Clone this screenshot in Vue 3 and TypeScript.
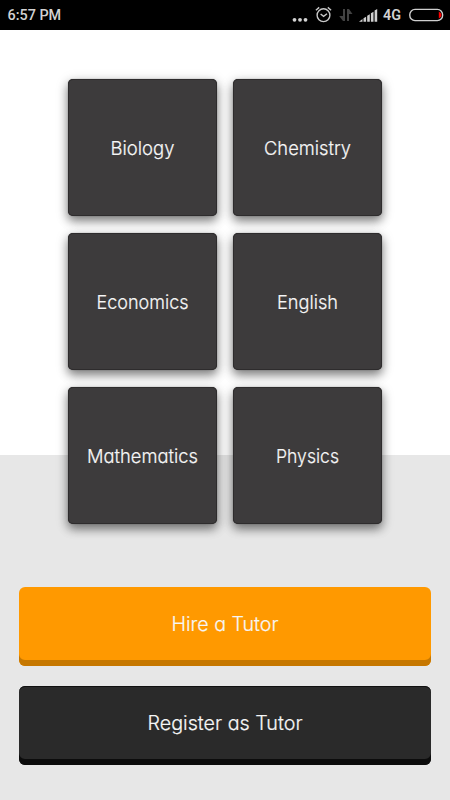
<script setup lang="ts">
interface Label {
  text: string
  width: number
}

const subjects: Label[] = [
  { text: 'Biology', width: 64 },
  { text: 'Chemistry', width: 87 },
  { text: 'Economics', width: 92 },
  { text: 'English', width: 61 },
  { text: 'Mathematics', width: 111 },
  { text: 'Physics', width: 63 },
]

const actions: (Label & { kind: string })[] = [
  { text: 'Hire a Tutor', width: 107, kind: 'hire' },
  { text: 'Register as Tutor', width: 155, kind: 'register' },
]
</script>

<template>
  <main class="screen">
    <header class="status">
      <span class="clock">6:57 PM</span>
      <svg class="dots" width="16" height="30" viewBox="0 0 16 30" fill="#d2d2d2">
        <circle cx="2.5" cy="19.8" r="1.9" />
        <circle cx="8" cy="19.8" r="1.9" />
        <circle cx="13.5" cy="19.8" r="1.9" />
      </svg>
      <svg class="alarm" width="18" height="30" viewBox="0 0 18 30" fill="none" stroke="#c8c8c8" stroke-width="1.4">
        <circle cx="8.5" cy="15.2" r="6.4" />
        <path d="M5.6 14 8.6 16.4 12 13.8M.9 10.2 4.2 7.4M16.1 10.2 12.8 7.4" />
      </svg>
      <svg class="data" width="14" height="30" viewBox="0 0 14 30" fill="#424242">
        <path d="M4 9h2v12H4L.2 16H4zM8 9h2l3.5 5H10v7H8z" />
      </svg>
      <svg class="signal" width="20" height="30" viewBox="0 0 20 30" fill="#cfcfcf">
        <path d="M0 21.7 3.5 19v2.7zM4.5 18.3 7.1 16.8v4.9H4.5zM8.2 15.8 10.8 14.3v7.4H8.2zM11.9 13.2 14.5 11.7v10H11.9zM15.6 10.4 18.2 8.9v12.8h-2.6z" />
      </svg>
      <span class="network">4G</span>
      <svg class="battery" width="35" height="30" viewBox="0 0 35 30">
        <rect x=".8" y="9.4" width="32.8" height="11.2" rx="5.2" fill="none" stroke="#cfcfcf" stroke-width="1.4" />
        <path d="M29.8 11.5Q32.5 12.5 32.5 15T29.8 18.5Z" fill="#ff0000" />
      </svg>
    </header>

    <section class="subjects">
      <button v-for="subject in subjects" :key="subject.text" class="card" type="button">
        <svg class="label" width="149" height="30">
          <text x="74.5" y="21.5" text-anchor="middle" :textLength="subject.width" lengthAdjust="spacingAndGlyphs">{{ subject.text }}</text>
        </svg>
      </button>
    </section>

    <section class="actions">
      <button v-for="action in actions" :key="action.text" class="action" :class="action.kind" type="button">
        <svg class="label" width="200" height="30">
          <text x="100" y="22" text-anchor="middle" :textLength="action.width" lengthAdjust="spacingAndGlyphs">{{ action.text }}</text>
        </svg>
      </button>
    </section>
  </main>
</template>

<style>
body {
  margin: 0;
}
</style>

<style scoped>
.screen {
  width: 450px;
  height: 800px;
  overflow: hidden;
  background: linear-gradient(#fff 455px, #e7e7e7 455px);
  font-family: Inter, Lato, sans-serif;
}

.status {
  display: flex;
  align-items: center;
  box-sizing: border-box;
  height: 30px;
  padding: 0 6px 0 7.5px;
  background: #000;
  color: #d2d2d2;
  font: 500 14.4px/30px Roboto, sans-serif;
}

.status svg {
  display: block;
  flex: none;
}

.clock {
  margin-right: auto;
  padding-top: 2px;
}

.alarm {
  margin-left: 7px;
}

.data {
  margin-left: 6px;
}

.signal {
  margin-left: 6px;
}

.network {
  width: 19px;
  margin: 0 7px 0 4px;
  padding-top: 2px;
  font-weight: 600;
}

.subjects {
  display: grid;
  grid-template-columns: 149px 149px;
  grid-auto-rows: 137px;
  gap: 17px 16px;
  justify-content: center;
  padding-top: 49px;
}

button {
  display: flex;
  align-items: center;
  justify-content: center;
  box-sizing: border-box;
  margin: 0;
  padding: 0;
  border: 0;
  color: #f6f6f6;
  font-family: inherit;
}

.card {
  border-radius: 5px;
  background: #3d3b3c;
  box-shadow: inset 0 0 0 1px #2e2c2d, 0 0 1px rgba(0, 0, 0, 0.5), 0 5px 10px rgba(0, 0, 0, 0.42), 0 3px 14px rgba(0, 0, 0, 0.18);
}

.label {
  display: block;
  overflow: visible;
  fill: currentColor;
  stroke: currentColor;
  stroke-width: 0.2px;
  stroke-linejoin: round;
  font-size: 18.8px;
  font-weight: 300;
  font-feature-settings: "cv11";
}

.actions {
  display: grid;
  grid-auto-rows: 79px;
  gap: 20px;
  padding: 63px 19px 0;
}

.action {
  padding-bottom: 5px;
  border-radius: 6px;
}

.action .label {
  font-size: 19.8px;
}

.hire {
  background: #ff9900;
  box-shadow: inset 0 -6px #c67700;
}

.register {
  background: #2a2a2a;
  box-shadow: inset 0 1px #111, inset 0 -6px #0c0c0c;
}
</style>
